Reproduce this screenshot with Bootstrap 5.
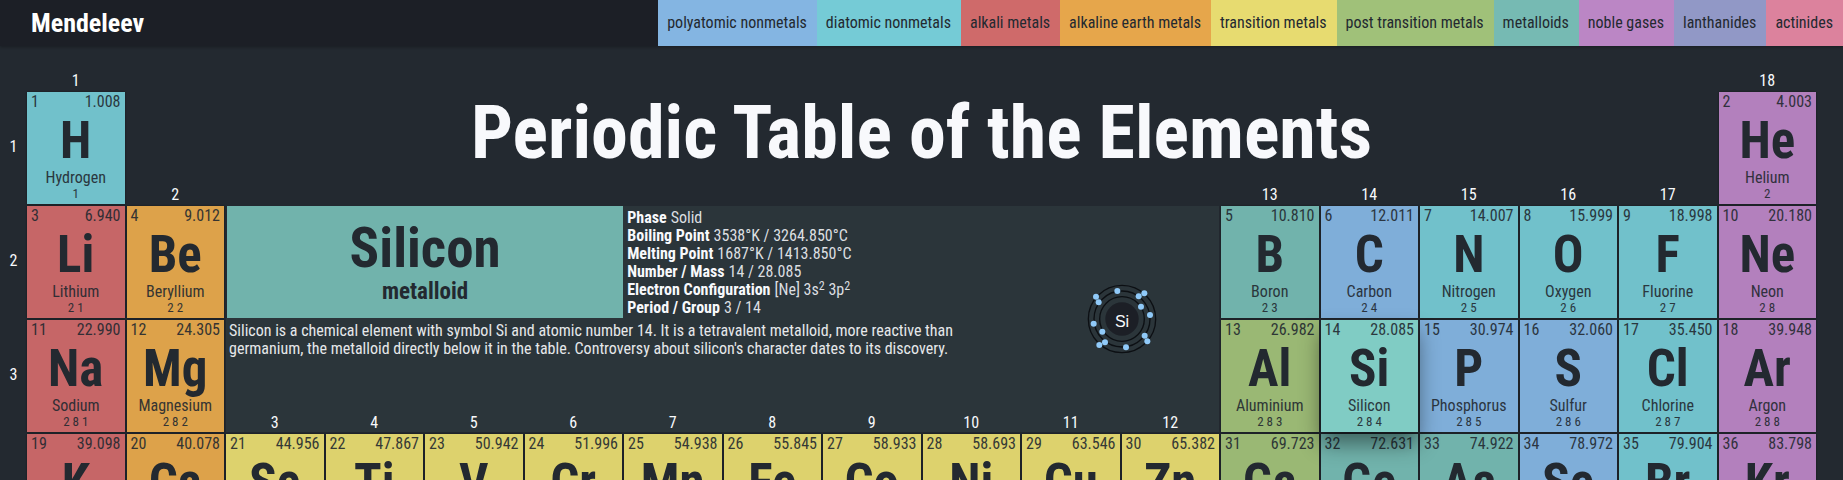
<!DOCTYPE html>
<html lang="en">
<head>
<meta charset="utf-8">
<meta name="viewport" content="width=device-width, initial-scale=1">
<title>Mendeleev</title>
<link href="https://cdn.jsdelivr.net/npm/bootstrap@5.3.0/dist/css/bootstrap.min.css" rel="stylesheet">
<style>
  body { background: #232930; color: #f8f9fc; font-family: "Roboto Condensed", "Liberation Sans Narrow", Roboto, sans-serif; font-size: 16px; line-height: 18px; }
  .topbar { background: #1c1f26; box-shadow: 0 1px 3px rgba(0,0,0,.3); height: 46px; }
  .brand { font-size: 26px; line-height: 46px; padding-left: 31px; color: #fff; }
  .legend li { padding: 0 10px 0 9px; line-height: 46px; color: #232930; white-space: nowrap; }
  .polyatomic { --tone: #84b5e2; --tile: #7faed9; }
  .diatomic { --tone: #75cbd6; --tile: #71c1cb; }
  .alkali { --tone: #cf6a6a; --tile: #c66667; }
  .alkaline { --tone: #e6a64b; --tile: #dda24a; }
  .transition-metal { --tone: #e7db70; --tile: #ddd26d; }
  .post { --tone: #a0c179; --tile: #9ab874; }
  .metalloid { --tone: #76bab3; --tile: #71b3ac; }
  .noble { --tone: #bb86c5; --tile: #b380bd; }
  .lanthanide { --tone: #9198c6; }
  .actinide { --tone: #dc829d; }
  .legend li { background: var(--tone); }
  .ptable { display: grid; grid-template-columns: 25px repeat(18, minmax(0, 1fr)); grid-template-rows: 20px repeat(4, 112px); gap: 2px; padding: 24px 27px 0 0; }
  .c1{grid-column:2} .c2{grid-column:3} .c3{grid-column:4} .c4{grid-column:5} .c5{grid-column:6} .c6{grid-column:7}
  .c7{grid-column:8} .c8{grid-column:9} .c9{grid-column:10} .c10{grid-column:11} .c11{grid-column:12} .c12{grid-column:13}
  .c13{grid-column:14} .c14{grid-column:15} .c15{grid-column:16} .c16{grid-column:17} .c17{grid-column:18} .c18{grid-column:19}
  .r0{grid-row:1} .r1{grid-row:2} .r2{grid-row:3} .r3{grid-row:4} .r4{grid-row:5}
  .group { align-self: end; text-align: center; line-height: 18px; z-index: 1; }
  .period { grid-column: 1; align-self: center; text-align: center; padding: 0 0 2px 2px; }
  .headline { grid-column: 3 / 19; font-size: 74px; line-height: 81px; }
  .tile { display: flex; flex-direction: column; border: 0; padding: 0 4px; background: var(--tile); color: #232930; text-align: center; box-shadow: 0 0 2px rgba(0,0,0,.4); }
  .tile > span { line-height: 20px; opacity: .9; }
  .tile > b { font-size: 51px; line-height: 58px; }
  .tile > b + span { line-height: 16px; }
  .tile > small { font-size: 13px; line-height: 16px; opacity: .9; }
  .tile.active { background: #80ccc4; z-index: 2; box-shadow: 0 12px 20px rgba(0,0,0,.45); }
  .detail { grid-column: 4 / 14; grid-row: 3 / 5; background: #2b353a; }
  .facts { width: 80%; }
  .name-tile { width: 50%; height: 112px; background: #71b3ac; color: #232930; border-left: 1px solid #232930; }
  .name-tile h2 { font-size: 55px; line-height: 60px; }
  .name-tile p { font-size: 23px; line-height: 28px; }
  .props { padding: 3px 0 0 4px; }
  .props dd { color: #dcdfe1; }
  .props sup { font-size: 12px; line-height: 0; top: -5px; }
  .about { padding: 4px 3px; color: #e6e8ea; }
  .atom { width: 20%; }
</style>
</head>
<body class="vh-100 overflow-hidden">
<header class="topbar d-flex justify-content-between">
  <a class="brand fw-bold text-decoration-none" href="#">Mendeleev</a>
  <ul class="legend list-unstyled d-flex mb-0">
    <li class="polyatomic">polyatomic nonmetals</li><li class="diatomic">diatomic nonmetals</li><li class="alkali">alkali metals</li><li class="alkaline">alkaline earth metals</li><li class="transition-metal">transition metals</li><li class="post">post transition metals</li><li class="metalloid">metalloids</li><li class="noble">noble gases</li><li class="lanthanide">lanthanides</li><li class="actinide">actinides</li>
  </ul>
</header>
<main class="ptable">
  <div class="group r0 c1">1</div><div class="group r1 c2">2</div>
  <div class="group r3 c3">3</div><div class="group r3 c4">4</div><div class="group r3 c5">5</div><div class="group r3 c6">6</div><div class="group r3 c7">7</div><div class="group r3 c8">8</div><div class="group r3 c9">9</div><div class="group r3 c10">10</div><div class="group r3 c11">11</div><div class="group r3 c12">12</div>
  <div class="group r1 c13">13</div><div class="group r1 c14">14</div><div class="group r1 c15">15</div><div class="group r1 c16">16</div><div class="group r1 c17">17</div><div class="group r0 c18">18</div>
  <div class="period r1">1</div><div class="period r2">2</div><div class="period r3">3</div>

  <h1 class="headline r1 fw-bold text-center mb-0">Periodic Table of the Elements</h1>

  <button class="tile diatomic r1 c1"><span class="d-flex justify-content-between"><i class="fst-normal">1</i><i class="fst-normal">1.008</i></span><b>H</b><span>Hydrogen</span><small>1</small></button>
  <button class="tile noble r1 c18"><span class="d-flex justify-content-between"><i class="fst-normal">2</i><i class="fst-normal">4.003</i></span><b>He</b><span>Helium</span><small>2</small></button>

  <button class="tile alkali r2 c1"><span class="d-flex justify-content-between"><i class="fst-normal">3</i><i class="fst-normal">6.940</i></span><b>Li</b><span>Lithium</span><small>2 1</small></button>
  <button class="tile alkaline r2 c2"><span class="d-flex justify-content-between"><i class="fst-normal">4</i><i class="fst-normal">9.012</i></span><b>Be</b><span>Beryllium</span><small>2 2</small></button>
  <button class="tile metalloid r2 c13"><span class="d-flex justify-content-between"><i class="fst-normal">5</i><i class="fst-normal">10.810</i></span><b>B</b><span>Boron</span><small>2 3</small></button>
  <button class="tile polyatomic r2 c14"><span class="d-flex justify-content-between"><i class="fst-normal">6</i><i class="fst-normal">12.011</i></span><b>C</b><span>Carbon</span><small>2 4</small></button>
  <button class="tile diatomic r2 c15"><span class="d-flex justify-content-between"><i class="fst-normal">7</i><i class="fst-normal">14.007</i></span><b>N</b><span>Nitrogen</span><small>2 5</small></button>
  <button class="tile diatomic r2 c16"><span class="d-flex justify-content-between"><i class="fst-normal">8</i><i class="fst-normal">15.999</i></span><b>O</b><span>Oxygen</span><small>2 6</small></button>
  <button class="tile diatomic r2 c17"><span class="d-flex justify-content-between"><i class="fst-normal">9</i><i class="fst-normal">18.998</i></span><b>F</b><span>Fluorine</span><small>2 7</small></button>
  <button class="tile noble r2 c18"><span class="d-flex justify-content-between"><i class="fst-normal">10</i><i class="fst-normal">20.180</i></span><b>Ne</b><span>Neon</span><small>2 8</small></button>

  <button class="tile alkali r3 c1"><span class="d-flex justify-content-between"><i class="fst-normal">11</i><i class="fst-normal">22.990</i></span><b>Na</b><span>Sodium</span><small>2 8 1</small></button>
  <button class="tile alkaline r3 c2"><span class="d-flex justify-content-between"><i class="fst-normal">12</i><i class="fst-normal">24.305</i></span><b>Mg</b><span>Magnesium</span><small>2 8 2</small></button>
  <button class="tile post r3 c13"><span class="d-flex justify-content-between"><i class="fst-normal">13</i><i class="fst-normal">26.982</i></span><b>Al</b><span>Aluminium</span><small>2 8 3</small></button>
  <button class="tile metalloid active r3 c14"><span class="d-flex justify-content-between"><i class="fst-normal">14</i><i class="fst-normal">28.085</i></span><b>Si</b><span>Silicon</span><small>2 8 4</small></button>
  <button class="tile polyatomic r3 c15"><span class="d-flex justify-content-between"><i class="fst-normal">15</i><i class="fst-normal">30.974</i></span><b>P</b><span>Phosphorus</span><small>2 8 5</small></button>
  <button class="tile polyatomic r3 c16"><span class="d-flex justify-content-between"><i class="fst-normal">16</i><i class="fst-normal">32.060</i></span><b>S</b><span>Sulfur</span><small>2 8 6</small></button>
  <button class="tile diatomic r3 c17"><span class="d-flex justify-content-between"><i class="fst-normal">17</i><i class="fst-normal">35.450</i></span><b>Cl</b><span>Chlorine</span><small>2 8 7</small></button>
  <button class="tile noble r3 c18"><span class="d-flex justify-content-between"><i class="fst-normal">18</i><i class="fst-normal">39.948</i></span><b>Ar</b><span>Argon</span><small>2 8 8</small></button>

  <button class="tile alkali r4 c1"><span class="d-flex justify-content-between"><i class="fst-normal">19</i><i class="fst-normal">39.098</i></span><b>K</b></button>
  <button class="tile alkaline r4 c2"><span class="d-flex justify-content-between"><i class="fst-normal">20</i><i class="fst-normal">40.078</i></span><b>Ca</b></button>
  <button class="tile transition-metal r4 c3"><span class="d-flex justify-content-between"><i class="fst-normal">21</i><i class="fst-normal">44.956</i></span><b>Sc</b></button>
  <button class="tile transition-metal r4 c4"><span class="d-flex justify-content-between"><i class="fst-normal">22</i><i class="fst-normal">47.867</i></span><b>Ti</b></button>
  <button class="tile transition-metal r4 c5"><span class="d-flex justify-content-between"><i class="fst-normal">23</i><i class="fst-normal">50.942</i></span><b>V</b></button>
  <button class="tile transition-metal r4 c6"><span class="d-flex justify-content-between"><i class="fst-normal">24</i><i class="fst-normal">51.996</i></span><b>Cr</b></button>
  <button class="tile transition-metal r4 c7"><span class="d-flex justify-content-between"><i class="fst-normal">25</i><i class="fst-normal">54.938</i></span><b>Mn</b></button>
  <button class="tile transition-metal r4 c8"><span class="d-flex justify-content-between"><i class="fst-normal">26</i><i class="fst-normal">55.845</i></span><b>Fe</b></button>
  <button class="tile transition-metal r4 c9"><span class="d-flex justify-content-between"><i class="fst-normal">27</i><i class="fst-normal">58.933</i></span><b>Co</b></button>
  <button class="tile transition-metal r4 c10"><span class="d-flex justify-content-between"><i class="fst-normal">28</i><i class="fst-normal">58.693</i></span><b>Ni</b></button>
  <button class="tile transition-metal r4 c11"><span class="d-flex justify-content-between"><i class="fst-normal">29</i><i class="fst-normal">63.546</i></span><b>Cu</b></button>
  <button class="tile transition-metal r4 c12"><span class="d-flex justify-content-between"><i class="fst-normal">30</i><i class="fst-normal">65.382</i></span><b>Zn</b></button>
  <button class="tile post r4 c13"><span class="d-flex justify-content-between"><i class="fst-normal">31</i><i class="fst-normal">69.723</i></span><b>Ga</b></button>
  <button class="tile metalloid r4 c14"><span class="d-flex justify-content-between"><i class="fst-normal">32</i><i class="fst-normal">72.631</i></span><b>Ge</b></button>
  <button class="tile metalloid r4 c15"><span class="d-flex justify-content-between"><i class="fst-normal">33</i><i class="fst-normal">74.922</i></span><b>As</b></button>
  <button class="tile polyatomic r4 c16"><span class="d-flex justify-content-between"><i class="fst-normal">34</i><i class="fst-normal">78.972</i></span><b>Se</b></button>
  <button class="tile diatomic r4 c17"><span class="d-flex justify-content-between"><i class="fst-normal">35</i><i class="fst-normal">79.904</i></span><b>Br</b></button>
  <button class="tile noble r4 c18"><span class="d-flex justify-content-between"><i class="fst-normal">36</i><i class="fst-normal">83.798</i></span><b>Kr</b></button>

  <section class="detail d-flex">
    <div class="facts">
      <div class="d-flex">
        <div class="name-tile d-flex flex-column justify-content-center text-center flex-shrink-0">
          <h2 class="fw-bold mb-0">Silicon</h2>
          <p class="fw-bold mb-0">metalloid</p>
        </div>
        <dl class="props mb-0 text-nowrap">
          <div class="d-flex gap-1"><dt>Phase</dt><dd class="mb-0">Solid</dd></div>
          <div class="d-flex gap-1"><dt>Boiling Point</dt><dd class="mb-0">3538°K / 3264.850°C</dd></div>
          <div class="d-flex gap-1"><dt>Melting Point</dt><dd class="mb-0">1687°K / 1413.850°C</dd></div>
          <div class="d-flex gap-1"><dt>Number / Mass</dt><dd class="mb-0">14 / 28.085</dd></div>
          <div class="d-flex gap-1"><dt>Electron Configuration</dt><dd class="mb-0">[Ne] 3s<sup>2</sup> 3p<sup>2</sup></dd></div>
          <div class="d-flex gap-1"><dt>Period / Group</dt><dd class="mb-0">3 / 14</dd></div>
        </dl>
      </div>
      <p class="about mb-0">Silicon is a chemical element with symbol Si and atomic number 14. It is a tetravalent metalloid, more reactive than germanium, the metalloid directly below it in the table. Controversy about silicon's character dates to its discovery.</p>
    </div>
    <div class="atom d-flex align-items-center justify-content-center ps-1">
      <svg width="72" height="72" viewBox="0 0 216 216" role="img" aria-label="Silicon atom">
        <g fill="none" stroke="#0c0f13" stroke-width="4"><circle cx="108" cy="108" r="101"/><circle cx="108" cy="108" r="84"/><circle cx="108" cy="108" r="67"/></g>
        <circle cx="108" cy="108" r="50" fill="#1c1f26"/>
        <g fill="#90caf9"><circle cx="94" cy="24" r="9"/><circle cx="158" cy="40" r="9"/><circle cx="175" cy="31" r="9"/><circle cx="30" cy="41" r="9"/><circle cx="38" cy="58" r="9"/><circle cx="165" cy="71" r="9"/><circle cx="192" cy="96" r="9"/><circle cx="23" cy="122" r="9"/><circle cx="49" cy="146" r="9"/><circle cx="40" cy="186" r="9"/><circle cx="57" cy="178" r="9"/><circle cx="120" cy="193" r="9"/><circle cx="176" cy="158" r="9"/><circle cx="184" cy="175" r="9"/></g>
        <text x="108" y="131" text-anchor="middle" font-family="Liberation Sans, sans-serif" font-size="48" fill="#f8f9fc">Si</text>
      </svg>
    </div>
  </section>
</main>
<script src="https://cdn.jsdelivr.net/npm/bootstrap@5.3.0/dist/js/bootstrap.bundle.min.js"></script>
</body>
</html>
